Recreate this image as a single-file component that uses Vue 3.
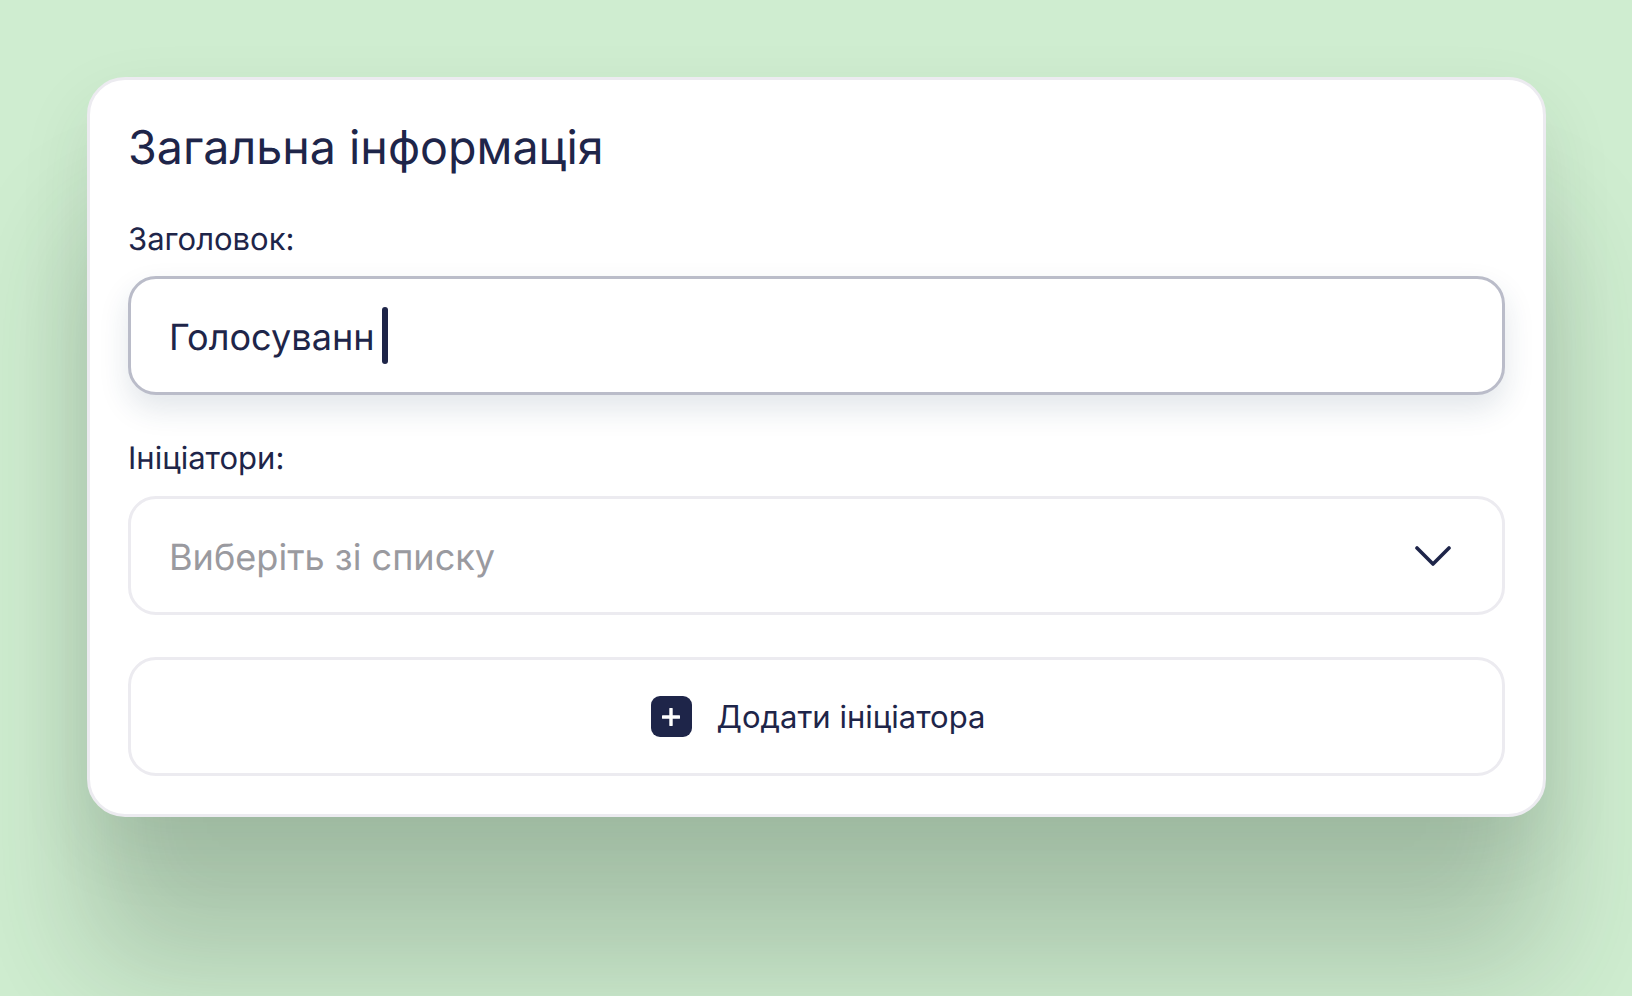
<template>
  <div class="page">
    <section class="card">
      <h1 class="card-title">Загальна інформація</h1>

      <div class="field">
        <label class="field-label">Заголовок:</label>
        <div class="control control-active">
          <span class="control-text">Голосуванн</span>
          <span class="caret"></span>
        </div>
      </div>

      <div class="field field-select">
        <label class="field-label">Ініціатори:</label>
        <div class="control">
          <span class="control-text placeholder">Виберіть зі списку</span>
          <svg class="chevron" viewBox="0 0 36 20" fill="none" stroke="currentColor">
            <path d="M2 2L18 18L34 2" />
          </svg>
        </div>
      </div>

      <button class="add-btn" type="button">
        <span class="add-icon">
          <svg viewBox="0 0 18 18" fill="none" stroke="#fff">
            <path d="M9 1V17M1 9H17" />
          </svg>
        </span>
        <span class="add-text">Додати ініціатора</span>
      </button>
    </section>
  </div>
</template>

<script setup>
</script>

<style>
html, body {
  margin: 0;
  background: #cfedd0;
}
</style>

<style scoped>
.page {
  box-sizing: border-box;
  height: 996px;
  padding: 77px 86px 0 87px;
  overflow: hidden;
  background: #cfedd0;
  font-family: Inter, "Noto Sans", sans-serif;
  color: #1e2549;
  text-rendering: geometricPrecision;
}

.card {
  box-sizing: border-box;
  height: 740px;
  padding: 38px 38px 0;
  background: #fff;
  border: 3px solid #ecebf0;
  border-radius: 38px;
  box-shadow: 0 30px 70px rgba(40, 60, 45, 0.1), 0 150px 120px rgba(40, 60, 45, 0.22);
}

.card-title {
  margin: 0 0 43px;
  font-size: 46.6px;
  line-height: 60px;
  font-weight: 400;
}

.field-label {
  display: block;
  margin-bottom: 17px;
  font-size: 31px;
  line-height: 38px;
}

.field-select {
  margin-top: 45px;
}

.field-select .field-label {
  margin-bottom: 18px;
}

.control {
  box-sizing: border-box;
  display: flex;
  align-items: center;
  height: 119px;
  padding: 0 51px 0 38px;
  border: 3px solid #ecebf0;
  border-radius: 28px;
  background: #fff;
}

.control-active {
  border-color: #babcc9;
  box-shadow: 0 14px 30px rgba(30, 60, 90, 0.13);
}

.control-text {
  margin-top: 2px;
  font-size: 36.1px;
  line-height: 44px;
}

.placeholder {
  flex: 1;
  color: #9a9a9f;
}

.caret {
  width: 6px;
  height: 57px;
  margin-left: 7px;
  border-radius: 3px;
  background: #1e2549;
}

.chevron {
  width: 36px;
  height: 20px;
  stroke-width: 3.6;
  stroke-linecap: round;
  stroke-linejoin: round;
}

.add-btn {
  box-sizing: border-box;
  display: flex;
  align-items: center;
  justify-content: center;
  gap: 25px;
  width: 100%;
  height: 119px;
  margin-top: 42px;
  padding: 0 0 0 3px;
  border: 3px solid #ecebf0;
  border-radius: 28px;
  background: #fff;
  font: inherit;
  color: inherit;
}

.add-icon {
  display: flex;
  align-items: center;
  justify-content: center;
  width: 41px;
  height: 41px;
  border-radius: 9px;
  background: #1e2549;
}

.add-icon svg {
  width: 18px;
  height: 18px;
  stroke-width: 3.4;
  stroke-linecap: round;
}

.add-text {
  font-size: 31px;
  line-height: 40px;
}
</style>
